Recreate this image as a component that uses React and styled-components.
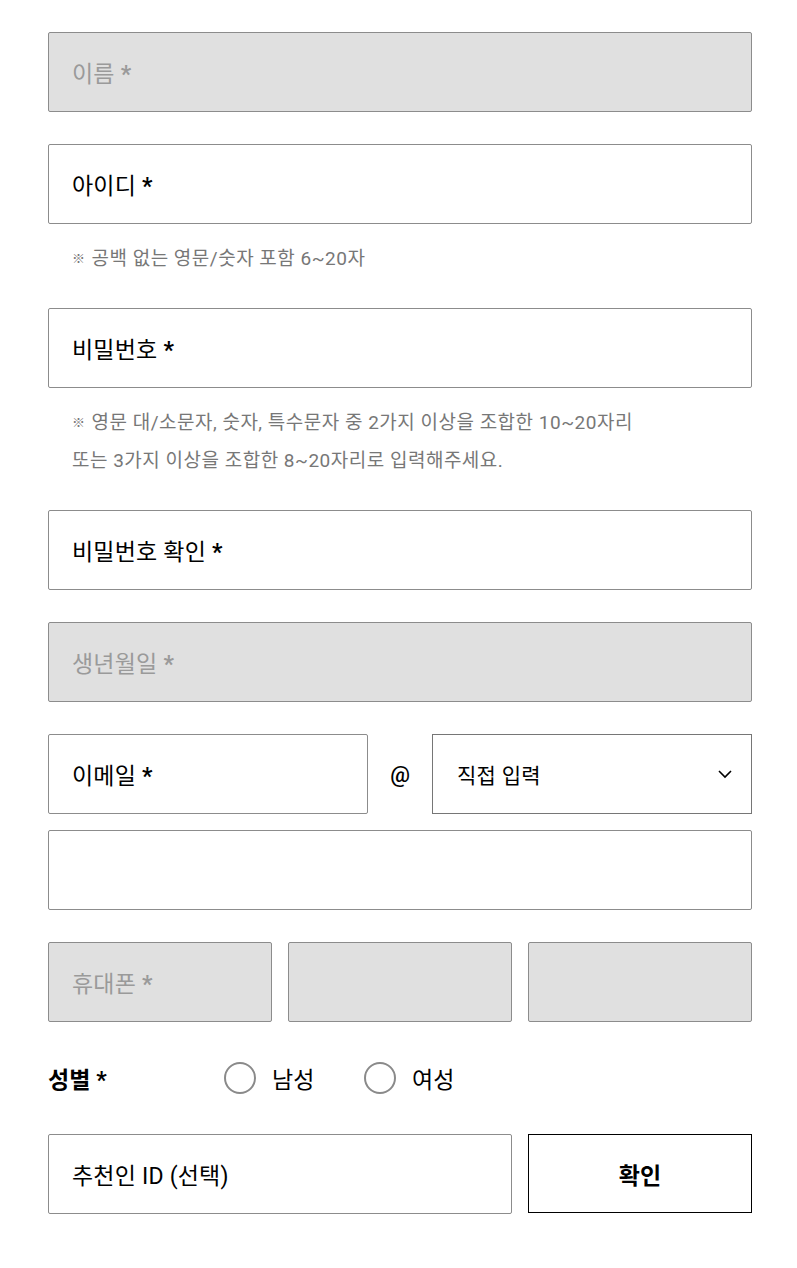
import React from "react";
import styled, { createGlobalStyle } from "styled-components";

const Global = createGlobalStyle`
  html, body { margin: 0; padding: 0; background: #fff; }
  body { font-family: Roboto, "Noto Sans CJK KR", sans-serif; color: #000; }
  * { box-sizing: border-box; }
`;

const Form = styled.div`
  width: 797px;
  padding: 32px 45px 48px 48px;
  display: flex;
  flex-direction: column;
  gap: 32px;
`;

const Field = styled.div`
  height: 80px;
  width: ${(p) => p.$w || "100%"};
  flex: none;
  border: 1px solid #8c8c8c;
  border-radius: 2px;
  background: ${(p) => (p.$disabled ? "#e0e0e0" : "#fff")};
  color: ${(p) => (p.$disabled ? "#9a9a9a" : "#000")};
  display: flex;
  align-items: center;
  padding-left: 23px;
  font-size: 23px;
  letter-spacing: 0.2px;
`;

const Star = styled.span`
  font-weight: 700;
  margin-left: 6px;
`;

const Hint = styled.div`
  margin: -18px 0 0 24px;
  display: flex;
  flex-direction: column;
`;

const HintLine = styled.div`
  height: 38px;
  line-height: 41px;
  font-size: 19px;
  color: #777;
  letter-spacing: 0.5px;
  overflow: hidden;
  white-space: nowrap;
`;

const Mark = styled.span`
  font-size: 13px;
  margin-right: 6px;
  vertical-align: 2px;
`;

const Group = styled.div`
  display: flex;
  flex-direction: column;
  gap: 16px;
`;

const Row = styled.div`
  display: flex;
  align-items: center;
  gap: ${(p) => p.$gap || "16px"};
`;

const At = styled.div`
  width: 64px;
  text-align: center;
  font-size: 22px;
  font-weight: 500;
`;

const Select = styled.div`
  width: 320px;
  height: 80px;
  border: 1px solid #767676;
  display: flex;
  align-items: center;
  justify-content: space-between;
  padding: 0 18px 0 24px;
  font-size: 21px;
  letter-spacing: 0.3px;
`;

const GenderRow = styled.div`
  height: 48px;
  display: flex;
  align-items: center;
`;

const GenderLabel = styled.div`
  width: 176px;
  font-size: 23px;
  font-weight: 700;
`;

const Option = styled.label`
  display: flex;
  align-items: center;
  gap: 16px;
  width: 140px;
  font-size: 23px;
`;

const Circle = styled.span`
  width: 32px;
  height: 32px;
  border-radius: 50%;
  border: 2px solid #8a8a8a;
  display: inline-block;
`;

const Button = styled.div`
  width: 224px;
  height: 79px;
  align-self: flex-start;
  border: 1px solid #000;
  display: flex;
  align-items: center;
  justify-content: center;
  font-size: 23px;
  font-weight: 700;
`;

const Label = ({ text }) => (
  <span>
    {text}
    <Star>*</Star>
  </span>
);

export default function App() {
  return (
    <>
      <Global />
      <Form>
        <Field $disabled>
          <Label text="이름" />
        </Field>
        <Field>
          <Label text="아이디" />
        </Field>
        <Hint>
          <HintLine>
            <Mark>※</Mark>공백 없는 영문/숫자 포함 6~20자
          </HintLine>
        </Hint>
        <Field>
          <Label text="비밀번호" />
        </Field>
        <Hint>
          <HintLine>
            <Mark>※</Mark>영문 대/소문자, 숫자, 특수문자 중 2가지 이상을 조합한 10~20자리
          </HintLine>
          <HintLine>또는 3가지 이상을 조합한 8~20자리로 입력해주세요.</HintLine>
        </Hint>
        <Field>
          <Label text="비밀번호 확인" />
        </Field>
        <Field $disabled>
          <Label text="생년월일" />
        </Field>
        <Group>
          <Row $gap="0">
            <Field $w="320px">
              <Label text="이메일" />
            </Field>
            <At>@</At>
            <Select>
              <span>직접 입력</span>
              <svg width="16" height="10" viewBox="0 0 16 10">
                <path d="M2 2 L8 8 L14 2" fill="none" stroke="#000" strokeWidth="1.6" />
              </svg>
            </Select>
          </Row>
          <Field />
        </Group>
        <Row>
          <Field $disabled $w="224px">
            <Label text="휴대폰" />
          </Field>
          <Field $disabled $w="224px" />
          <Field $disabled $w="224px" />
        </Row>
        <GenderRow>
          <GenderLabel>
            성별<Star>*</Star>
          </GenderLabel>
          <Option>
            <Circle />
            남성
          </Option>
          <Option>
            <Circle />
            여성
          </Option>
        </GenderRow>
        <Row>
          <Field $w="464px">추천인 ID (선택)</Field>
          <Button>확인</Button>
        </Row>
      </Form>
    </>
  );
}
